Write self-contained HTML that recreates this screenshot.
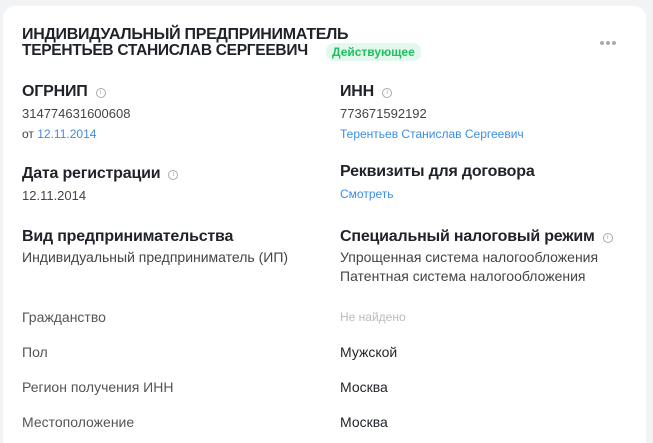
<!DOCTYPE html>
<html><head><meta charset="utf-8"><style>
*{margin:0;padding:0;box-sizing:border-box}
html,body{width:653px;height:443px;overflow:hidden}
body{background:#f2f3f5;font-family:"Liberation Sans",sans-serif;position:relative}
.card{position:absolute;left:3px;top:6px;width:643px;height:437px;background:#fff;border-radius:12px 12px 0 0}
.a{position:absolute;white-space:nowrap}
.t{font-size:16px;font-weight:bold;color:#1f2329;line-height:16px;letter-spacing:-0.3px}
.h{font-size:16px;font-weight:bold;color:#1f2329;letter-spacing:-0.2px}
.v{font-size:13px;color:#444}
.l{font-size:12px;color:#3a8ee6}
.g{font-size:14px;color:#555}
.b{font-size:14px;color:#1f2329}
.i{display:inline-block;width:10px;height:10px;border:1px solid #aaa;border-radius:50%;font-size:7px;color:#aaa;text-align:center;line-height:8px;vertical-align:2px;margin-left:8px;font-weight:normal}
.badge{background:#e3f8ec;color:#1fbf62;font-size:12px;font-weight:bold;padding:2px 6px;border-radius:8px}
.dot{position:absolute;width:4px;height:4px;border-radius:50%;background:#aaa;top:41px}
</style></head><body>
<div class="card"></div>
<div class="a t" style="left:22px;top:27px">ИНДИВИДУАЛЬНЫЙ ПРЕДПРИНИМАТЕЛЬ</div>
<div class="a t" style="left:22px;top:43px;transform:scaleX(0.97);transform-origin:left">ТЕРЕНТЬЕВ СТАНИСЛАВ СЕРГЕЕВИЧ</div>
<div class="a badge" style="left:326px;top:43px">Действующее</div>
<div class="dot" style="left:600px"></div><div class="dot" style="left:606px"></div><div class="dot" style="left:612px"></div>

<div class="a h" style="left:22px;top:83px">ОГРНИП<span class="i">i</span></div>
<div class="a v" style="left:22px;top:106px">314774631600608</div>
<div class="a" style="left:22px;top:127px;font-size:12px;color:#444">от <span style="color:#3a8ee6">12.11.2014</span></div>
<div class="a h" style="left:340px;top:83px">ИНН<span class="i">i</span></div>
<div class="a v" style="left:340px;top:106px">773671592192</div>
<div class="a l" style="left:340px;top:127px">Терентьев Станислав Сергеевич</div>

<div class="a h" style="left:22px;top:165px">Дата регистрации<span class="i">i</span></div>
<div class="a v" style="left:22px;top:188px">12.11.2014</div>
<div class="a h" style="left:340px;top:163px">Реквизиты для договора</div>
<div class="a l" style="left:340px;top:187px">Смотреть</div>

<div class="a h" style="left:22px;top:228px">Вид предпринимательства</div>
<div class="a v" style="left:22px;top:249px;font-size:14px">Индивидуальный предприниматель (ИП)</div>
<div class="a h" style="left:340px;top:228px">Специальный налоговый режим<span class="i">i</span></div>
<div class="a v" style="left:340px;top:249px;font-size:14px">Упрощенная система налогообложения</div>
<div class="a v" style="left:340px;top:268px;font-size:14px">Патентная система налогообложения</div>

<div class="a g" style="left:22px;top:309px">Гражданство</div>
<div class="a" style="left:340px;top:310px;font-size:12px;color:#bbb">Не найдено</div>
<div class="a g" style="left:22px;top:344px">Пол</div>
<div class="a b" style="left:340px;top:344px">Мужской</div>
<div class="a g" style="left:22px;top:379px">Регион получения ИНН</div>
<div class="a b" style="left:340px;top:379px">Москва</div>
<div class="a g" style="left:22px;top:414px">Местоположение</div>
<div class="a b" style="left:340px;top:414px">Москва</div>
</body></html>
